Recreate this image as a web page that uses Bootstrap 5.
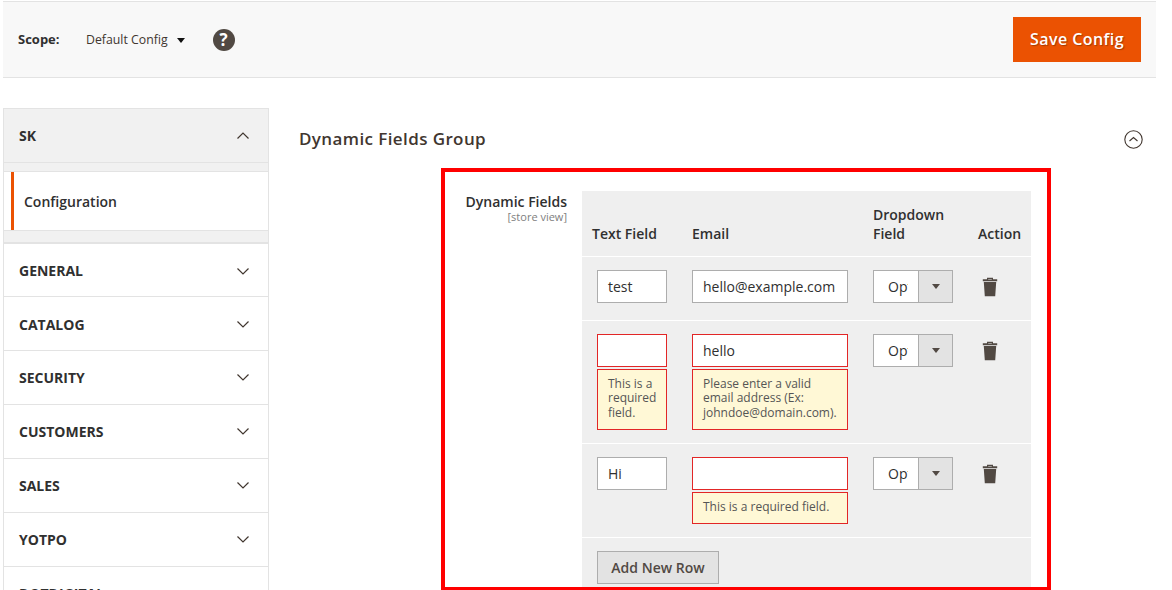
<!DOCTYPE html>
<html lang="en"><head><meta charset="utf-8"><title>Config</title>
<link href="https://cdn.jsdelivr.net/npm/bootstrap@5.3.0/dist/css/bootstrap.min.css" rel="stylesheet">
<style>
html,body{height:590px;overflow:hidden;background:#fff}
body{font-family:"Open Sans",sans-serif;font-size:14px;color:#41362f;line-height:1.36}
.topbar{margin:1px 16px 0 3px;height:77px;background:#f8f8f8;border-top:1px solid #e3e3e3;border-bottom:1px solid #e3e3e3;padding:0 15px}
.scope-lbl{font-size:13px;font-weight:700;color:#303030;width:68px}
.scope-val{font-size:12.3px;color:#41362f;padding-top:1px}
.caret-dn{width:0;height:0;border-left:4.5px solid transparent;border-right:4.5px solid transparent;border-top:5px solid #111;margin:2px 0 0 9px}
.help-i{width:22px;height:22px;border-radius:50%;background:#514943;color:#fff;font-weight:700;font-size:17px;line-height:22px;text-align:center;margin-left:28px}
.save-btn{width:128px;height:45px;background:#eb5202;color:#fff;border:0;border-radius:0;font-size:16px;font-weight:600;letter-spacing:.45px;text-shadow:1px 1px 1px rgba(0,0,0,.3);padding:0 0 2px}
.save-btn:hover{background:#eb5202;color:#fff}
.mainrow{margin-top:30px;margin-left:3px}
.side{width:266px;flex:none}
.sec-head{height:54px;padding:0 15px;border:1px solid #e3e3e3;border-top:0;background:#fff;font-weight:700;color:#303030;font-size:14px}
.sec-head svg{margin-right:4px}
.sec-first{background:#f1f1f1;border-top:1px solid #e3e3e3;height:55px}
.sec-top{border-top:1px solid #e3e3e3}
.sec-low{padding-top:2px}
.sec-gap{height:9px;background:#f1f1f1;border:1px solid #e3e3e3;border-top:0}
.sec-gap2{height:13px;background:#f1f1f1;border:1px solid #e3e3e3}
.sec-item{height:58px;border-left:3px solid #eb5202;margin-left:7px;padding:2px 0 0 10px;font-weight:600;color:#303030;background:#fff}
.sec-itemwrap{background:#fff;border-left:1px solid #e3e3e3;border-right:1px solid #e3e3e3}
.content-col{width:0;flex:1}
.grp-head{padding:19px 29px 0 30px;height:60px}
.grp-title{font-size:17px;font-weight:600;color:#41362f;letter-spacing:.4px;margin:0;line-height:24px}
.grp-head svg{margin-top:3px}
.redbox{margin-left:172px;width:610px;height:423px;border:4px solid #f00;padding:19px 16px 0 0}
.lbl-col{width:122px;flex:none;text-align:right;margin-right:15px;padding-top:1px}
.lbl-main{font-weight:600;color:#303030;line-height:19px}
.lbl-sub{font-size:11px;color:#808080;line-height:12px}
.dyn-tbl{width:449px;table-layout:fixed;border-collapse:collapse;background:#efefef}
.dyn-tbl th{font-weight:600;color:#303030;vertical-align:bottom;padding:0 0 13px 10px;line-height:19px;height:65px}
.dyn-tbl td{vertical-align:top;padding:13px 15px 13px 10px;border-top:1px solid #fff}
.dyn-tbl td:first-child{padding-left:15px}
.ctl{display:block;width:100%;height:33px;border:1px solid #adadad;background:#fff;padding:0 10px;font-size:14px;color:#303030;line-height:31px;border-radius:0;overflow:hidden;white-space:nowrap}
.ctl.bad{border-color:#e22626}
.err{margin-top:2px;border:1px solid #e22626;background:#fff8d6;color:#555;font-size:12px;line-height:14.5px;padding:7px 5px 8.5px 10px}
.sel{width:80px;height:33px;border:1px solid #adadad;display:flex;background:#fff;margin-bottom:4px}
.sel-v{width:45px;padding-left:14px;line-height:31px;color:#303030;border-right:1px solid #adadad;white-space:nowrap;overflow:hidden}
.sel-t{display:block;width:20px;overflow:hidden}
.sel-a{flex:1;background:#e3e3e3;display:flex;align-items:center;justify-content:center}
.sel-a i{display:block;width:0;height:0;border-left:4px solid transparent;border-right:4px solid transparent;border-top:5px solid #514943}
.trash{display:block;margin:7px 0 0 4px}
.add-btn{height:33px;width:122px;background:#e3e3e3;border:1px solid #adadad;border-radius:0;color:#514943;font-weight:600;font-size:14px;padding:0}
.add-btn:hover{background:#e3e3e3;color:#514943;border-color:#adadad}
.add-td{padding-bottom:0!important;height:50px}
</style></head><body>
<div class="topbar d-flex align-items-center">
  <span class="scope-lbl">Scope:</span>
  <span class="scope-val">Default Config</span><span class="caret-dn"></span>
  <span class="help-i">?</span>
  <button class="btn save-btn ms-auto">Save Config</button>
</div>
<div class="mainrow d-flex">
  <div class="side">
    <div class="sec-head sec-first d-flex align-items-center justify-content-between">SK
      <svg width="12" height="7" viewBox="0 0 12 7"><path d="M.5 6.5l5.5-5.5 5.5 5.5" fill="none" stroke="#41362f" stroke-width="1.2"/></svg></div>
    <div class="sec-gap"></div>
    <div class="sec-itemwrap"><div class="sec-item d-flex align-items-center">Configuration</div></div>
    <div class="sec-gap2"></div>
    <div class="sec-head sec-top sec-low d-flex align-items-center justify-content-between">GENERAL
      <svg width="12" height="7" viewBox="0 0 12 7"><path d="M.5.5l5.5 5.5 5.5-5.5" fill="none" stroke="#41362f" stroke-width="1.2"/></svg></div>
    <div class="sec-head sec-low d-flex align-items-center justify-content-between">CATALOG
      <svg width="12" height="7" viewBox="0 0 12 7"><path d="M.5.5l5.5 5.5 5.5-5.5" fill="none" stroke="#41362f" stroke-width="1.2"/></svg></div>
    <div class="sec-head d-flex align-items-center justify-content-between">SECURITY
      <svg width="12" height="7" viewBox="0 0 12 7"><path d="M.5.5l5.5 5.5 5.5-5.5" fill="none" stroke="#41362f" stroke-width="1.2"/></svg></div>
    <div class="sec-head d-flex align-items-center justify-content-between">CUSTOMERS
      <svg width="12" height="7" viewBox="0 0 12 7"><path d="M.5.5l5.5 5.5 5.5-5.5" fill="none" stroke="#41362f" stroke-width="1.2"/></svg></div>
    <div class="sec-head d-flex align-items-center justify-content-between">SALES
      <svg width="12" height="7" viewBox="0 0 12 7"><path d="M.5.5l5.5 5.5 5.5-5.5" fill="none" stroke="#41362f" stroke-width="1.2"/></svg></div>
    <div class="sec-head d-flex align-items-center justify-content-between">YOTPO
      <svg width="12" height="7" viewBox="0 0 12 7"><path d="M.5.5l5.5 5.5 5.5-5.5" fill="none" stroke="#41362f" stroke-width="1.2"/></svg></div>
    <div class="sec-head d-flex align-items-center justify-content-between">DOTDIGITAL
      <svg width="12" height="7" viewBox="0 0 12 7"><path d="M.5.5l5.5 5.5 5.5-5.5" fill="none" stroke="#41362f" stroke-width="1.2"/></svg></div>
  </div>
  <div class="content-col">
    <div class="grp-head d-flex justify-content-between align-items-start">
      <h2 class="grp-title">Dynamic Fields Group</h2>
      <svg width="19" height="19" viewBox="0 0 19 19"><circle cx="9.5" cy="9.5" r="8.7" fill="none" stroke="#41362f" stroke-width="1.1"/><path d="M5.5 11l4-3.5 4 3.5" fill="none" stroke="#41362f" stroke-width="1.1"/></svg>
    </div>
    <div class="redbox d-flex">
      <div class="lbl-col"><div class="lbl-main">Dynamic Fields</div><div class="lbl-sub">[store view]</div></div>
      <table class="dyn-tbl">
        <colgroup><col style="width:100px"><col style="width:181px"><col style="width:105px"><col style="width:63px"></colgroup>
        <thead><tr><th>Text Field</th><th>Email</th><th>Dropdown Field</th><th>Action</th></tr></thead>
        <tbody>
          <tr><td><div class="ctl">test</div></td><td><div class="ctl">hello@example.com</div></td>
            <td><div class="sel"><span class="sel-v"><span class="sel-t">Option</span></span><span class="sel-a"><i></i></span></div></td>
            <td><svg class="trash" width="16" height="20" viewBox="0 0 16 20"><path d="M5 2.2V.8h6v1.4h4.2v2H.8v-2zM6.2 1.9v.6h3.6v-.6zM1.8 5h12.4l-1 14.2H2.8z" fill="#514943" fill-rule="evenodd"/></svg></td></tr>
          <tr><td><div class="ctl bad"></div><div class="err">This is a required field.</div></td>
            <td><div class="ctl bad">hello</div><div class="err">Please enter a valid email address (Ex: johndoe@domain.com).</div></td>
            <td><div class="sel"><span class="sel-v"><span class="sel-t">Option</span></span><span class="sel-a"><i></i></span></div></td>
            <td><svg class="trash" width="16" height="20" viewBox="0 0 16 20"><path d="M5 2.2V.8h6v1.4h4.2v2H.8v-2zM6.2 1.9v.6h3.6v-.6zM1.8 5h12.4l-1 14.2H2.8z" fill="#514943" fill-rule="evenodd"/></svg></td></tr>
          <tr><td><div class="ctl">Hi</div></td>
            <td><div class="ctl bad"></div><div class="err">This is a required field.</div></td>
            <td><div class="sel"><span class="sel-v"><span class="sel-t">Option</span></span><span class="sel-a"><i></i></span></div></td>
            <td><svg class="trash" width="16" height="20" viewBox="0 0 16 20"><path d="M5 2.2V.8h6v1.4h4.2v2H.8v-2zM6.2 1.9v.6h3.6v-.6zM1.8 5h12.4l-1 14.2H2.8z" fill="#514943" fill-rule="evenodd"/></svg></td></tr>
          <tr><td colspan="4" class="add-td"><button class="btn add-btn">Add New Row</button></td></tr>
        </tbody>
      </table>
    </div>
  </div>
</div>
<script src="https://cdn.jsdelivr.net/npm/bootstrap@5.3.0/dist/js/bootstrap.bundle.min.js"></script>
</body></html>
